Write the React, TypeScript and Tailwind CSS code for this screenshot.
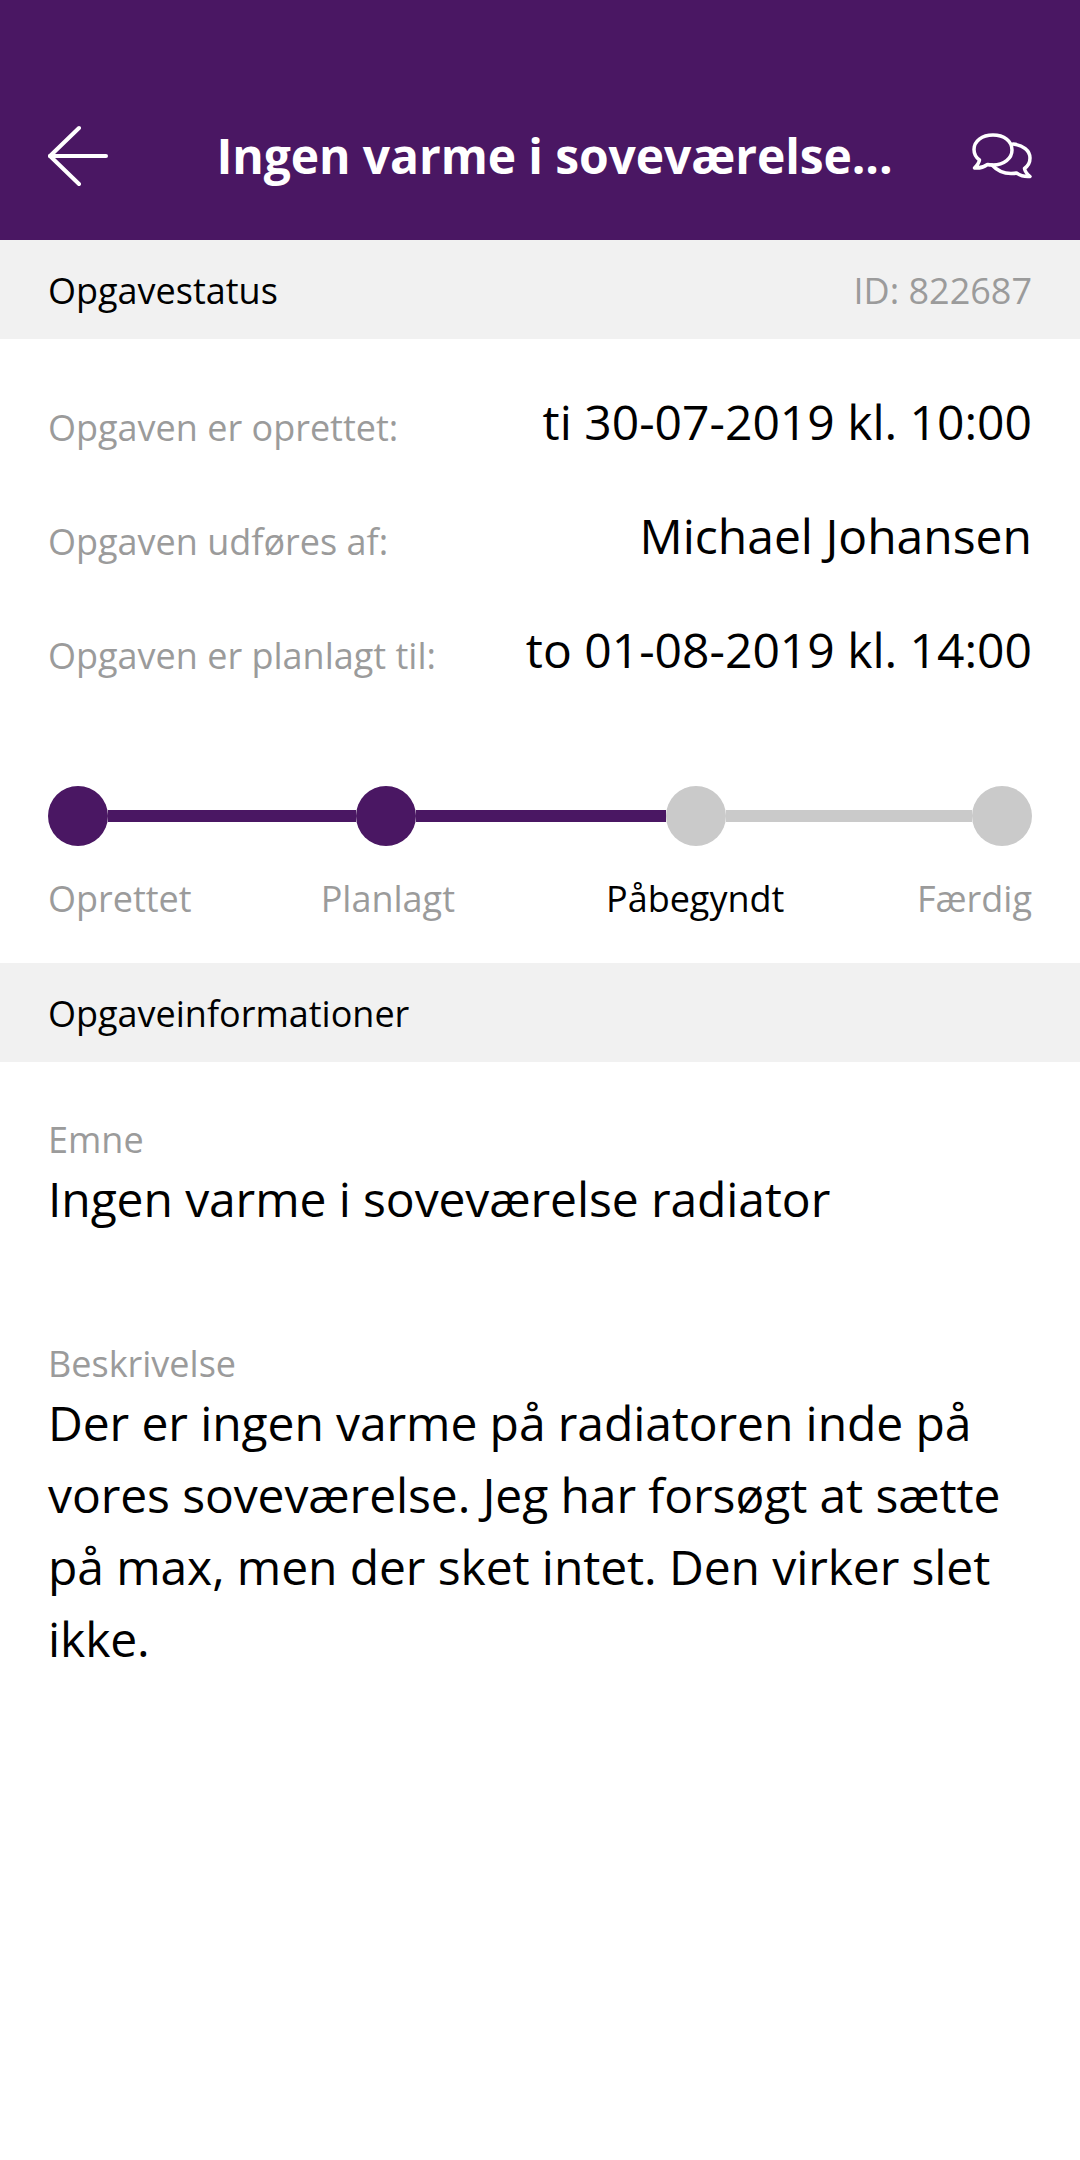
const rows = [
  { label: "Opgaven er oprettet:", value: "ti 30-07-2019 kl. 10:00" },
  { label: "Opgaven udføres af:", value: "Michael Johansen" },
  { label: "Opgaven er planlagt til:", value: "to 01-08-2019 kl. 14:00" },
];

function BackIcon() {
  return (
    <svg width="62" height="62" viewBox="0 0 62 62" fill="none" stroke="white" strokeWidth="4" strokeLinecap="round" strokeLinejoin="round">
      <path d="M2 31H58" />
      <path d="M31 3L2 31L31 59" />
    </svg>
  );
}

function ChatIcon() {
  return (
    <svg width="60" height="46" viewBox="0 0 60 46" fill="none" stroke="white" strokeWidth="3.5" strokeLinejoin="round" strokeLinecap="round">
      <path d="M21 2C10 2 2 8 2 16.500C2 21 4 24.500 7.500 27C7 30 5 32.500 2.500 35C7 35.500 12 34 15.500 31.500C17 32 19 32 21 32C32 32 40 25.500 40 17C40 8 32 2 21 2Z" />
      <path d="M41 11C51 12 58 17.500 58 25C58 29.500 56 33 52.500 35.500C53 38.500 55 41 58 43.500C53 44 48 42.500 44.500 40C43 40.500 41 40.500 39 40.500C32 40.500 25 37.500 20 32" />
    </svg>
  );
}

function SectionBar({ title, right }: { title: string; right?: string }) {
  return (
    <div className="h-[99px] bg-[#f1f1f1] px-[48px] pt-[3px] flex items-center justify-between">
      <span className="text-[36px] text-black">{title}</span>
      {right && <span className="text-[36px] text-[#9b9b9b]">{right}</span>}
    </div>
  );
}

export default function App() {
  return (
    <div className="w-[1080px] h-[2160px] bg-white font-['Open_Sans',sans-serif]">
      <header className="h-[240px] bg-[#4a1763] px-[48px] pt-[72px] flex items-center justify-between">
        <BackIcon />
        <h1 className="ml-[27px] text-[48px] leading-[72px] font-bold tracking-[-0.1px] text-white">Ingen varme i soveværelse...</h1>
        <ChatIcon />
      </header>

      <SectionBar title="Opgavestatus" right="ID: 822687" />

      <div className="px-[48px] pt-[30px]">
        {rows.map((r) => (
          <div key={r.label} className="h-[114px] flex items-center justify-between">
            <span className="text-[36px] text-[#9b9b9b] mt-[4px]">{r.label}</span>
            <span className="text-[48px] text-black -mt-[8px]">{r.value}</span>
          </div>
        ))}
      </div>

      <div className="px-[48px] pt-[75px]">
        <div className="flex items-center">
          <div className="w-[60px] h-[60px] rounded-full bg-[#4a1763]" />
          <div className="w-[248px] h-[12px] bg-[#4a1763]" />
          <div className="w-[60px] h-[60px] rounded-full bg-[#4a1763]" />
          <div className="w-[250px] h-[12px] bg-[#4a1763]" />
          <div className="w-[60px] h-[60px] rounded-full bg-[#cacaca]" />
          <div className="flex-1 h-[12px] bg-[#cacaca]" />
          <div className="w-[60px] h-[60px] rounded-full bg-[#cacaca]" />
        </div>
        <div className="flex pt-[28px] text-[36px] leading-[50px] text-[#9b9b9b]">
          <span>Oprettet</span>
          <span className="ml-[129px]">Planlagt</span>
          <span className="ml-[151px] text-black">Påbegyndt</span>
          <span className="ml-auto">Færdig</span>
        </div>
      </div>

      <div className="mt-[39px]">
        <SectionBar title="Opgaveinformationer" />
      </div>

      <div className="px-[48px] pt-[54px]">
        <div className="text-[36px] leading-[47px] text-[#9b9b9b]">Emne</div>
        <div className="text-[48px] leading-[72px] tracking-[-0.1px] text-black">Ingen varme i soveværelse radiator</div>
        <div className="text-[36px] leading-[47px] text-[#9b9b9b] mt-[105px]">Beskrivelse</div>
        <div className="text-[48px] leading-[72px] tracking-[-0.1px] text-black">
          Der er ingen varme på radiatoren inde på vores soveværelse. Jeg har forsøgt at sætte på max, men der sket intet. Den virker slet ikke.
        </div>
      </div>
    </div>
  );
}
